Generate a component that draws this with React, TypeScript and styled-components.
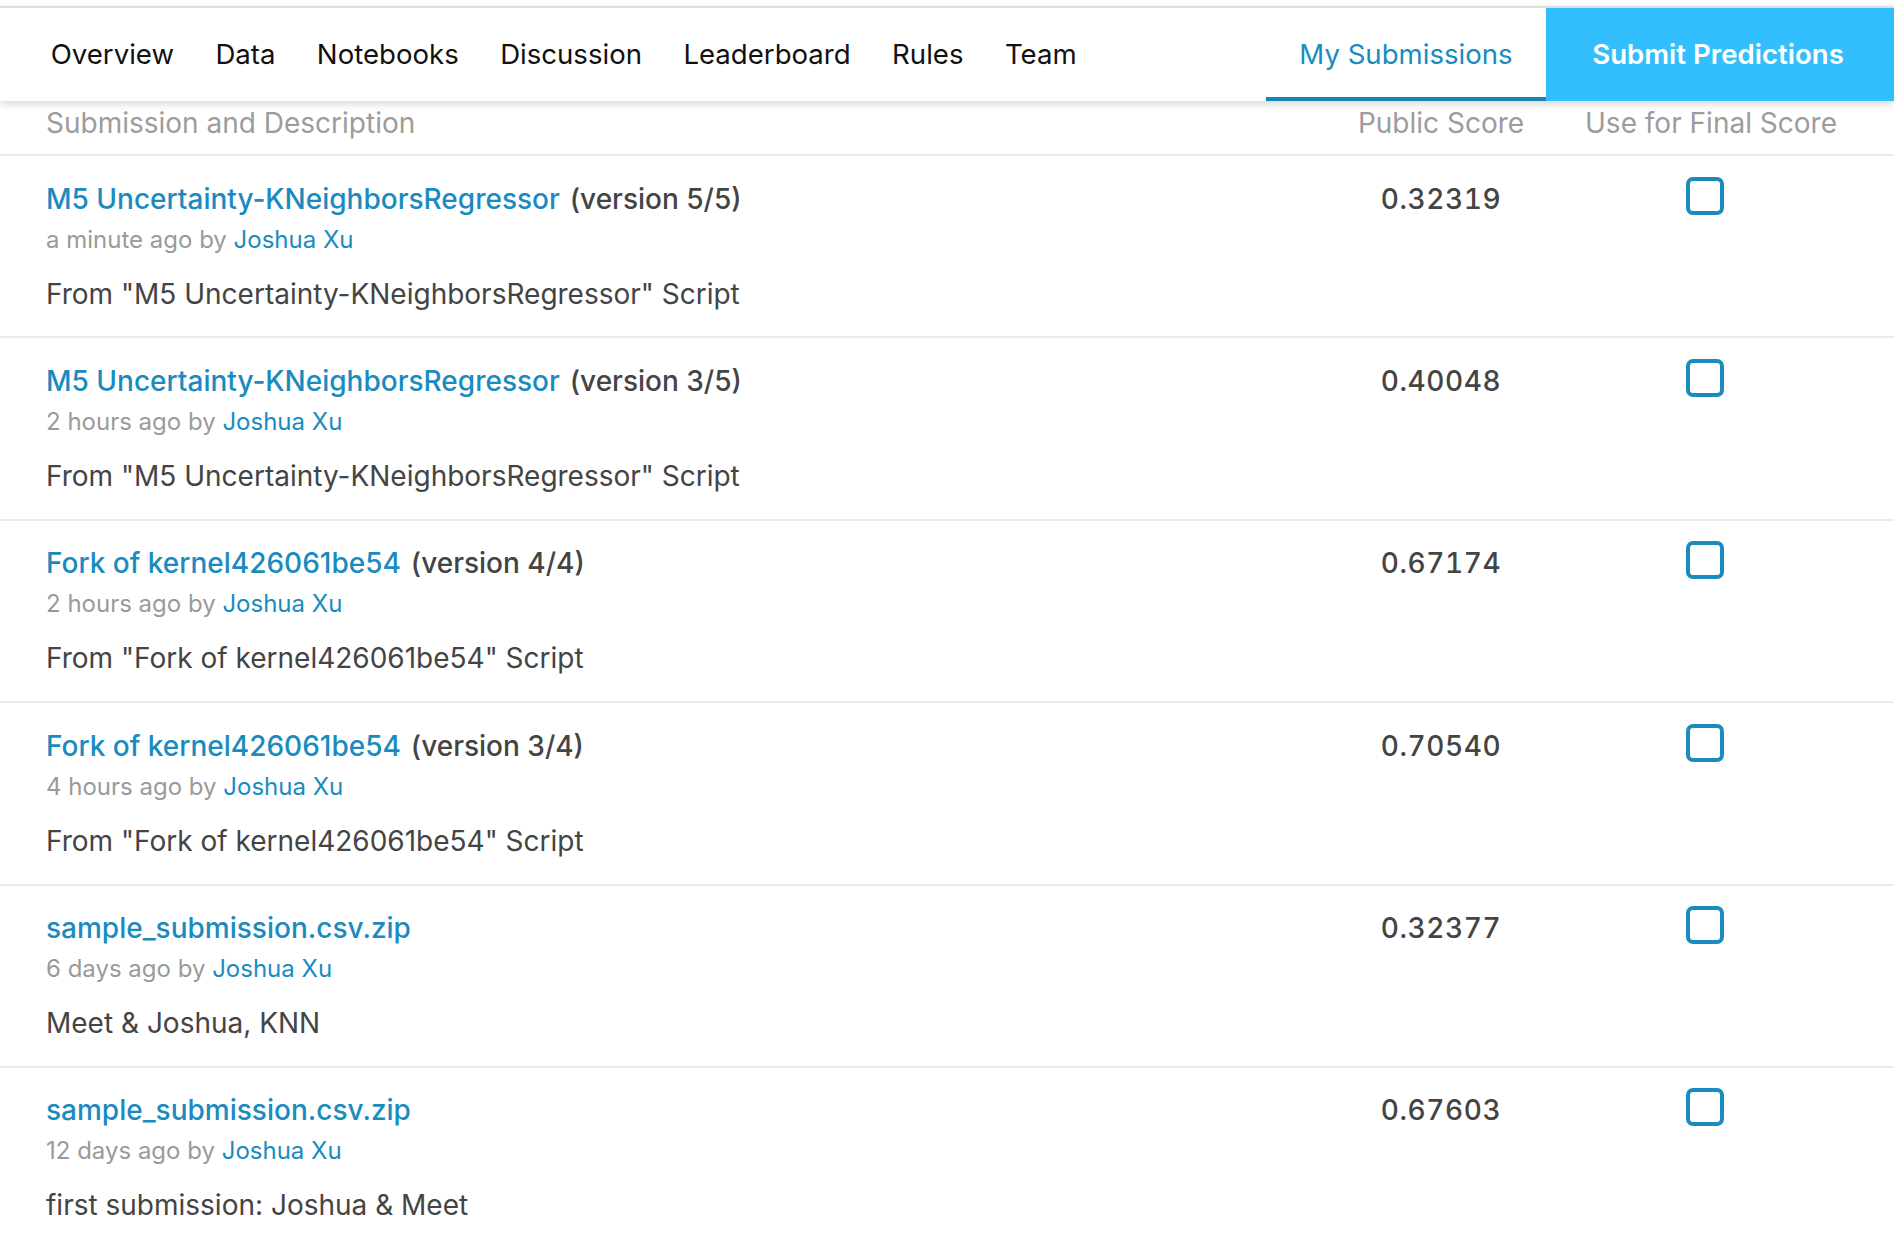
import React from "react";
import styled, { createGlobalStyle } from "styled-components";

const Global = createGlobalStyle`
  html, body { margin: 0; padding: 0; background: #ffffff; }
  body { font-family: Inter, "Noto Sans", sans-serif; -webkit-font-smoothing: antialiased; }
  * { box-sizing: border-box; }
`;

const Page = styled.div`
  width: 1894px;
  height: 1234px;
  overflow: hidden;
  padding-top: 6px;
  background: #fff;
`;

const NavBar = styled.nav`
  position: relative;
  z-index: 2;
  display: flex;
  align-items: stretch;
  height: 95px;
  border-top: 2px solid #dedede;
  background: #fff;
  box-shadow: 0 3px 8px rgba(0, 0, 0, 0.16);
`;

const NavLinks = styled.div`
  display: flex;
  align-items: center;
  flex: 1;
  padding: 0 0 2px 30px;
`;

const NavLink = styled.a`
  padding: 0 20.7px;
  font-size: 27.6px;
  color: #111;
  text-decoration: none;
`;

const TabLink = styled.a<{ $active?: boolean }>`
  display: flex;
  align-items: center;
  justify-content: center;
  width: 280px;
  font-size: 27.6px;
  color: #1a8bbf;
  text-decoration: none;
  border-bottom: 4px solid ${(p) => (p.$active ? "#1686b4" : "transparent")};
  padding-top: 2px;
`;

const SubmitButton = styled.a`
  display: flex;
  align-items: center;
  justify-content: center;
  width: 348px;
  padding: 0 4px 2px 0;
  background: #33befd;
  color: #fff;
  font-size: 27.6px;
  font-weight: 600;
  text-decoration: none;
`;

const Table = styled.div`
  display: flex;
  flex-direction: column;
`;

const HeaderRow = styled.div`
  display: grid;
  grid-template-columns: 1fr 250px 290px;
  align-items: start;
  height: 55px;
  padding: 5px 38px 0 46px;
  border-bottom: 2px solid #ececec;
  font-size: 28px;
  color: #9c9c9c;
  line-height: 34px;
`;

const HeadCell = styled.div<{ $center?: boolean }>`
  text-align: ${(p) => (p.$center ? "center" : "left")};
  white-space: nowrap;
`;

const Row = styled.div`
  display: grid;
  grid-template-columns: 1fr 250px 290px;
  align-items: start;
  height: 182.4px;
  padding: 25.5px 38px 0 46px;
  border-bottom: 2px solid #ececec;
`;

const Main = styled.div`
  display: flex;
  flex-direction: column;
`;

const TitleLine = styled.div`
  font-size: 28px;
  line-height: 34px;
  font-weight: 500;
  color: #444;
`;

const TitleLink = styled.a`
  color: #1a8bbf;
  text-decoration: none;
  margin-right: 10px;
`;

const Meta = styled.div`
  margin-top: 9px;
  font-size: 24px;
  line-height: 30px;
  color: #9a9a9a;
`;

const Author = styled.a`
  color: #1a8bbf;
  text-decoration: none;
`;

const Description = styled.div`
  margin-top: 22px;
  font-size: 28px;
  line-height: 34px;
  color: #444;
`;

const Score = styled.div`
  text-align: center;
  font-size: 28px;
  line-height: 34px;
  font-weight: 500;
  color: #444;
  font-variant-numeric: tabular-nums;
  letter-spacing: 0.6px;
`;

const CheckCell = styled.div`
  display: flex;
  justify-content: center;
  padding-right: 12px;
  margin-top: -5px;
`;

const Checkbox = styled.span`
  width: 38px;
  height: 38px;
  border: 4px solid #1a8bbf;
  border-radius: 7px;
  background: #fff;
`;

type Submission = {
  title: string;
  version?: string;
  ago: string;
  description: string;
  score: string;
};

const submissions: Submission[] = [
  {
    title: "M5 Uncertainty-KNeighborsRegressor",
    version: "(version 5/5)",
    ago: "a minute ago",
    description: 'From "M5 Uncertainty-KNeighborsRegressor" Script',
    score: "0.32319",
  },
  {
    title: "M5 Uncertainty-KNeighborsRegressor",
    version: "(version 3/5)",
    ago: "2 hours ago",
    description: 'From "M5 Uncertainty-KNeighborsRegressor" Script',
    score: "0.40048",
  },
  {
    title: "Fork of kernel426061be54",
    version: "(version 4/4)",
    ago: "2 hours ago",
    description: 'From "Fork of kernel426061be54" Script',
    score: "0.67174",
  },
  {
    title: "Fork of kernel426061be54",
    version: "(version 3/4)",
    ago: "4 hours ago",
    description: 'From "Fork of kernel426061be54" Script',
    score: "0.70540",
  },
  {
    title: "sample_submission.csv.zip",
    ago: "6 days ago",
    description: "Meet & Joshua, KNN",
    score: "0.32377",
  },
  {
    title: "sample_submission.csv.zip",
    ago: "12 days ago",
    description: "first submission: Joshua & Meet",
    score: "0.67603",
  },
];

const navItems = ["Overview", "Data", "Notebooks", "Discussion", "Leaderboard", "Rules", "Team"];

export default function App() {
  return (
    <Page>
      <Global />
      <NavBar>
        <NavLinks>
          {navItems.map((n) => (
            <NavLink key={n} href="#">
              {n}
            </NavLink>
          ))}
        </NavLinks>
        <TabLink $active href="#">
          My Submissions
        </TabLink>
        <SubmitButton href="#">Submit Predictions</SubmitButton>
      </NavBar>
      <Table>
        <HeaderRow>
          <HeadCell>Submission and Description</HeadCell>
          <HeadCell $center>Public Score</HeadCell>
          <HeadCell $center>Use for Final Score</HeadCell>
        </HeaderRow>
        {submissions.map((s, i) => (
          <Row key={i}>
            <Main>
              <TitleLine>
                <TitleLink href="#">{s.title}</TitleLink>
                {s.version}
              </TitleLine>
              <Meta>
                {s.ago} by <Author href="#">Joshua Xu</Author>
              </Meta>
              <Description>{s.description}</Description>
            </Main>
            <Score>{s.score}</Score>
            <CheckCell>
              <Checkbox />
            </CheckCell>
          </Row>
        ))}
      </Table>
    </Page>
  );
}
